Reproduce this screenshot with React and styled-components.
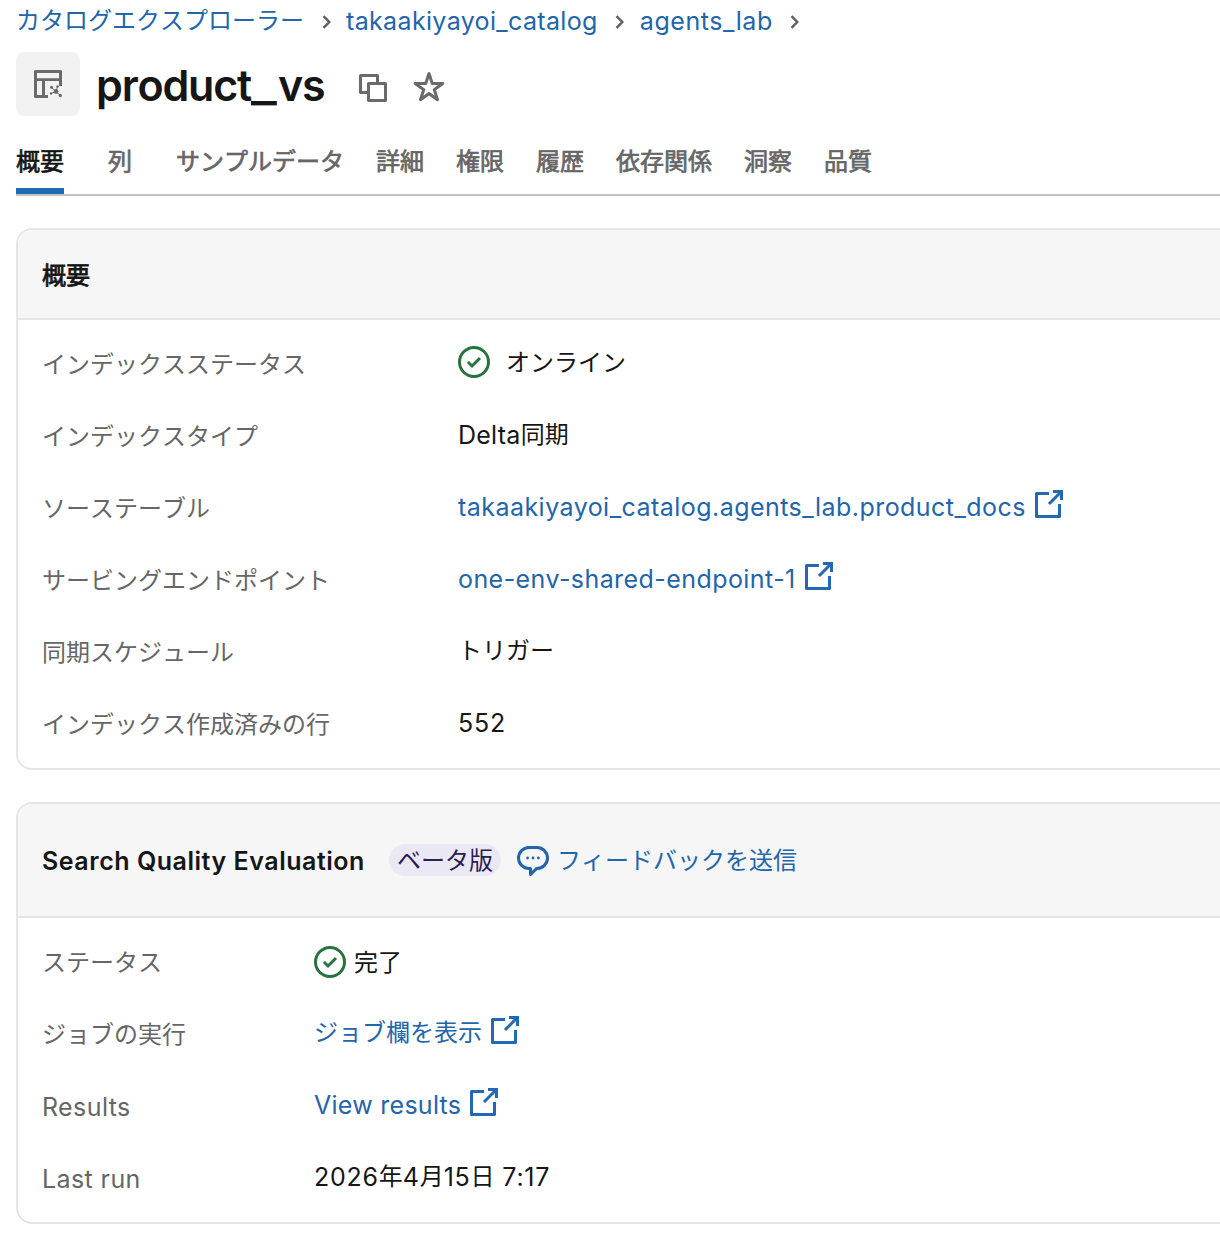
import React from "react";
import styled, { createGlobalStyle } from "styled-components";

const GlobalStyle = createGlobalStyle`
  *, *::before, *::after { box-sizing: border-box; }
  body {
    margin: 0;
    background: #fff;
    color: #161616;
    font-family: Inter, "Noto Sans CJK JP", sans-serif;
    font-size: 24px;
    line-height: 40px;
    font-kerning: none;
    overflow: hidden;
  }
`;

const Page = styled.main`
  width: 1240px;
  height: 1234px;
  padding-left: 16px;
  overflow: hidden;
`;

const Latin = styled.span`
  font-size: 25px;
  font-kerning: normal;
  letter-spacing: ${(p) => p.$track || "0.4px"};
`;

const Link = styled.a`
  color: #2265ab;
  white-space: nowrap;
`;

const Breadcrumbs = styled.nav`
  display: flex;
  align-items: center;
  height: 40px;
  padding-top: 2px;
`;

const Separator = styled.span`
  display: flex;
  width: 42px;
  justify-content: center;
  padding: 2px 0 0 3px;
  color: #5f5f5f;
`;

const TitleRow = styled.header`
  display: flex;
  align-items: center;
  height: 64px;
  margin-top: 12px;
`;

const IconTile = styled.div`
  display: grid;
  place-items: center;
  width: 64px;
  height: 64px;
  border-radius: 8px;
  background: #f2f2f2;
  color: #6a6a6a;
`;

const Title = styled.h1`
  margin: 0 32px 0 16px;
  padding-top: 2px;
  width: 229px;
  font-size: 43px;
  line-height: 56px;
  font-weight: 600;
  letter-spacing: -1.2px;
  white-space: nowrap;
`;

const WideUnderscore = styled.span`
  display: inline-block;
  width: 27px;
  letter-spacing: 0;
  transform: scaleX(1.28);
  transform-origin: left;
`;

const Actions = styled.div`
  display: flex;
  gap: 24px;
  padding-top: 8px;
  color: #6a6a6a;
`;

const Tabs = styled.nav`
  display: flex;
  gap: 32px;
  height: 64px;
  margin-top: 16px;
  border-bottom: 2px solid #c2c2c2;
`;

const Tab = styled.button`
  flex: none;
  min-width: 48px;
  height: 62px;
  padding: 4px 0 0;
  border: 0;
  border-bottom: 6px solid ${(p) => (p.$active ? "#2268b2" : "transparent")};
  background: none;
  font: inherit;
  font-kerning: none;
  -webkit-text-stroke: 0.7px currentColor;
  color: ${(p) => (p.$active ? "#161616" : "#666")};
`;

const Card = styled.section`
  margin-top: 32px;
  border: 2px solid #e6e6e6;
  border-radius: 16px;
  overflow: hidden;
`;

const CardHeader = styled.div`
  display: flex;
  align-items: center;
  height: ${(p) => p.$height};
  padding: 2px 0 0 24px;
  border-bottom: 2px solid #e6e6e6;
  background: #f6f6f6;
`;

const CardTitle = styled.h2`
  margin: 0;
  font-size: 24px;
  font-weight: 600;
  white-space: nowrap;
`;

const CardTitleJa = styled(CardTitle)`
  padding-top: 1px;
  font-weight: 400;
  -webkit-text-stroke: 0.8px currentColor;
`;

const Badge = styled.span`
  height: 32px;
  margin: -2px 16px 0 24px;
  padding: 0 8px;
  border-radius: 16px;
  background: #ebe8f6;
  color: #2b1d50;
  line-height: 34px;
`;

const Feedback = styled(Link)`
  display: flex;
  align-items: center;
  gap: 8px;
`;

const Rows = styled.dl`
  display: grid;
  grid-template-columns: ${(p) => p.$label} 1fr;
  grid-auto-rows: 40px;
  row-gap: 32px;
  margin: 0;
  padding: 24px 0 24px 24px;
`;

const Label = styled.dt`
  padding-top: 1px;
  color: #666;
`;

const Value = styled.dd`
  display: flex;
  align-items: center;
  gap: ${(p) => p.$gap || "7px"};
  height: 40px;
  margin: ${(p) => p.$shift || "-1px"} 0 0;
  white-space: nowrap;
`;

const Glyph = styled.svg`
  display: block;
  flex: none;
  fill: currentColor;
  color: ${(p) => p.$color || "inherit"};
  margin-bottom: ${(p) => p.$lift || "0"};
`;

const Chevron = () => (
  <Glyph width="10" height="16" viewBox="0 0 10 16">
    <path d="M1.5 2.2 7.3 8l-5.8 5.8" fill="none" stroke="currentColor" strokeWidth="2.4" />
  </Glyph>
);

const CheckIcon = () => (
  <Glyph width="32" height="32" viewBox="0 0 16 16" $color="#27723f" $lift="2px">
    <path d="m11.53 6.53-1.06-1.06L7 8.94 5.53 7.47 4.47 8.53 7 11.06z" />
    <path fillRule="evenodd" d="M0 8a8 8 0 1 1 16 0A8 8 0 0 1 0 8m8-6.5a6.5 6.5 0 1 0 0 13 6.5 6.5 0 0 0 0-13" />
  </Glyph>
);

const ExternalIcon = () => (
  <Glyph width="32" height="32" viewBox="0 0 16 16" $color="#2268b2" $lift="6px">
    <path d="M10 1h5v5h-1.5V3.56L8.53 8.53 7.47 7.47l4.97-4.97H10z" />
    <path d="M1 2.75A.75.75 0 0 1 1.75 2H8v1.5H2.5v10h10V8H14v6.25a.75.75 0 0 1-.75.75H1.75a.75.75 0 0 1-.75-.75z" />
  </Glyph>
);

const CopyIcon = () => (
  <Glyph width="32" height="32" viewBox="0 0 16 16">
    <path fillRule="evenodd" d="M1.75 1a.75.75 0 0 0-.75.75v8.5c0 .414.336.75.75.75H5v3.25c0 .414.336.75.75.75h8.5a.75.75 0 0 0 .75-.75v-8.5a.75.75 0 0 0-.75-.75H11V1.75a.75.75 0 0 0-.75-.75zM9.5 5V2.5h-7v7H5V5.75A.75.75 0 0 1 5.75 5zm-3 8.5v-7h7v7z" />
  </Glyph>
);

const StarIcon = () => (
  <Glyph width="32" height="32" viewBox="0 0 16 16">
    <path fillRule="evenodd" d="M7.995 0a.75.75 0 0 1 .714.518l1.459 4.492h4.723a.75.75 0 0 1 .44 1.356l-3.82 2.776 1.459 4.492a.75.75 0 0 1-1.154.838l-3.82-2.776-3.821 2.776a.75.75 0 0 1-1.154-.838L4.48 9.142.66 6.366A.75.75 0 0 1 1.1 5.01h4.723L7.282.518A.75.75 0 0 1 7.995 0m0 3.177-.914 2.814a.75.75 0 0 1-.713.519h-2.96l2.394 1.739a.75.75 0 0 1 .273.839l-.915 2.814 2.394-1.74a.75.75 0 0 1 .882 0l2.394 1.74-.914-2.814a.75.75 0 0 1 .272-.839l2.394-1.74H9.623a.75.75 0 0 1-.713-.518z" />
  </Glyph>
);

const IndexIcon = () => (
  <Glyph width="32" height="32" viewBox="0 0 32 32">
    <path fillRule="evenodd" d="M3.5 2h25A1.5 1.5 0 0 1 30 3.5V18h-3v-5H13v14h3v3H3.5A1.5 1.5 0 0 1 2 28.5V3.5A1.5 1.5 0 0 1 3.5 2M5 5v5.200h22V5zm0 8v14h5V13z" />
    <path d="m19.500 19.300 4.500 4.200 4.300 4M24 23.500l1.500-5M24 23.500l-5 2" fill="none" stroke="currentColor" strokeWidth="1" />
    <circle cx="24" cy="23.500" r="2.400" />
    <circle cx="19.500" cy="19.300" r="1.500" />
    <circle cx="25.500" cy="18.500" r="1.200" />
    <circle cx="19" cy="25.500" r="1.200" />
    <circle cx="28.300" cy="27.500" r="1.700" />
  </Glyph>
);

const SpeechIcon = () => (
  <Glyph width="32" height="32" viewBox="0 0 16 16" $lift="2px">
    <path fillRule="evenodd" d="M6 1a6 6 0 1 0 0 12v2.250a.75.75 0 0 0 1.280.530L10.061 13A6 6 0 0 0 10 1zM1.500 7A4.500 4.500 0 0 1 6 2.500h4a4.500 4.500 0 0 1 0 9h-.250a.75.75 0 0 0-.530.220L7.500 13.440v-1.190a.75.75 0 0 0-.750-.750H6A4.500 4.500 0 0 1 1.500 7" />
    <circle cx="5.300" cy="7" r=".7" />
    <circle cx="8" cy="7" r=".7" />
    <circle cx="10.700" cy="7" r=".7" />
  </Glyph>
);

const tabs = ["概要", "列", "サンプルデータ", "詳細", "権限", "履歴", "依存関係", "洞察", "品質"];

export default function App() {
  return (
    <>
      <GlobalStyle />
      <Page lang="ja">
        <Breadcrumbs>
          <Link>カタログエクスプローラー</Link>
          <Separator><Chevron /></Separator>
          <Link><Latin $track="0.35px">takaakiyayoi_catalog</Latin></Link>
          <Separator><Chevron /></Separator>
          <Link><Latin $track="0.55px">agents_lab</Latin></Link>
          <Separator><Chevron /></Separator>
        </Breadcrumbs>
        <TitleRow>
          <IconTile><IndexIcon /></IconTile>
          <Title>product<WideUnderscore>_</WideUnderscore>vs</Title>
          <Actions><CopyIcon /><StarIcon /></Actions>
        </TitleRow>
        <Tabs>
          {tabs.map((name, i) => (
            <Tab key={name} $active={i === 0}>{name}</Tab>
          ))}
        </Tabs>
        <Card>
          <CardHeader $height="90px"><CardTitleJa>概要</CardTitleJa></CardHeader>
          <Rows $label="416px">
            <Label>インデックスステータス</Label>
            <Value $gap="16px"><CheckIcon />オンライン</Value>
            <Label>インデックスタイプ</Label>
            <Value $gap="0"><Latin $track="0.25px">Delta</Latin>同期</Value>
            <Label>ソーステーブル</Label>
            <Value><Link><Latin $track="0.46px">takaakiyayoi_catalog.agents_lab.product_docs</Latin></Link><ExternalIcon /></Value>
            <Label>サービングエンドポイント</Label>
            <Value><Link><Latin $track="0.43px">one-env-shared-endpoint-1</Latin></Link><ExternalIcon /></Value>
            <Label>同期スケジュール</Label>
            <Value>トリガー</Value>
            <Label>インデックス作成済みの行</Label>
            <Value><Latin $track="0.8px">552</Latin></Value>
          </Rows>
        </Card>
        <Card>
          <CardHeader $height="114px">
            <CardTitle><Latin $track="0.53px">Search Quality Evaluation</Latin></CardTitle>
            <Badge>ベータ版</Badge>
            <Feedback><SpeechIcon />フィードバックを送信</Feedback>
          </CardHeader>
          <Rows $label="272px">
            <Label>ステータス</Label>
            <Value $gap="8px" $shift="1px"><CheckIcon />完了</Value>
            <Label>ジョブの実行</Label>
            <Value><Link>ジョブ欄を表示</Link><ExternalIcon /></Value>
            <Label><Latin>Results</Latin></Label>
            <Value><Link><Latin $track="0.27px">View results</Latin></Link><ExternalIcon /></Value>
            <Label><Latin>Last run</Latin></Label>
            <Value $gap="0"><Latin $track="0.75px">2026</Latin>年<Latin $track="0.75px">4</Latin>月<Latin $track="0.75px">15</Latin>日<Latin $track="0.75px">&nbsp;7:17</Latin></Value>
          </Rows>
        </Card>
      </Page>
    </>
  );
}
